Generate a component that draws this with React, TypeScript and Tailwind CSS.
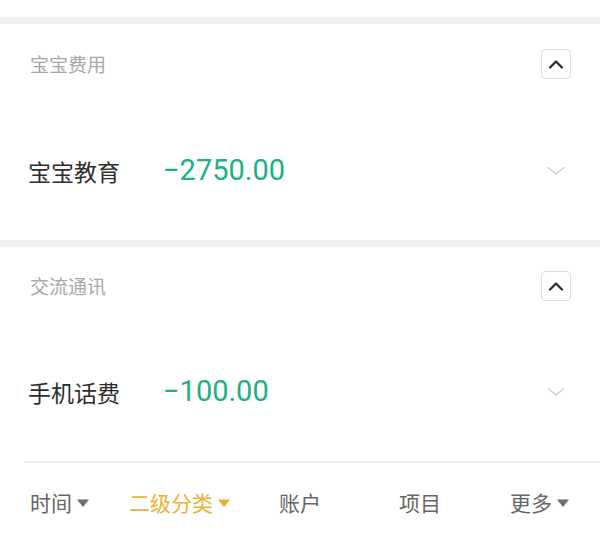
import * as React from "react";

const CJK = { fontFamily: '"Noto Sans CJK SC", "Noto Sans", sans-serif' };

function ChevronUpBox() {
  return (
    <div className="w-[30px] h-[30px] rounded-[4px] border border-[#dcdcdc] flex items-center justify-center bg-white">
      <svg width="16" height="10" viewBox="0 0 16 10" fill="none">
        <path d="M2 8.5L8 2.5L14 8.5" stroke="#2a2a2a" strokeWidth="2.2" strokeLinecap="round" strokeLinejoin="round" />
      </svg>
    </div>
  );
}

function ChevronDown() {
  return (
    <svg width="20" height="12" viewBox="0 0 20 12" fill="none">
      <path d="M2 2.5L10 9L18 2.5" stroke="#cfcfcf" strokeWidth="1.6" strokeLinecap="round" strokeLinejoin="round" />
    </svg>
  );
}

function Caret({ color }: { color: string }) {
  return (
    <svg width="14" height="10" viewBox="0 0 14 10" className="ml-[4px]">
      <path d="M1 1.5H13L7 9Z" fill={color} />
    </svg>
  );
}

interface Group {
  title: string;
  label: string;
  amount: string;
  headerH: string;
}

function Section({ g }: { g: Group }) {
  return (
    <div className="bg-white">
      <div className={`${g.headerH} flex items-center justify-between pl-[30px] pr-[29px]`}>
        <span className="text-[19px] text-[#a8a8a8]" style={CJK}>{g.title}</span>
        <ChevronUpBox />
      </div>
      <div className="h-[134px] flex items-center pl-[28px] pr-[34px]">
        <span className="w-[135px] text-[23px] text-[#2e2e2e]" style={CJK}>{g.label}</span>
        <span
          className="flex-1 text-[29px] font-normal text-[#22b07b]"
          style={{ fontFamily: "Roboto, sans-serif" }}
        >
          {g.amount}
        </span>
        <ChevronDown />
      </div>
    </div>
  );
}

export default function App() {
  const tabs = [
    { name: "时间", caret: true, active: false },
    { name: "二级分类", caret: true, active: true },
    { name: "账户", caret: false, active: false },
    { name: "项目", caret: false, active: false },
    { name: "更多", caret: true, active: false },
  ];

  return (
    <div className="w-[600px] h-[543px] bg-white overflow-hidden">
      <div className="h-[17px] bg-white" />
      <div className="h-[7px] bg-[#f0f0f0]" />
      <Section g={{ title: "宝宝费用", label: "宝宝教育", amount: "−2750.00", headerH: "h-[80px]" }} />
      <div className="h-[2px] bg-white" />
      <div className="h-[7px] bg-[#f0f0f0]" />
      <Section g={{ title: "交流通讯", label: "手机话费", amount: "−100.00", headerH: "h-[78px]" }} />
      <div className="h-[2px] bg-white" />
      <div className="h-[2px] bg-[#ededed] ml-[24px]" />
      <div className="h-[80px] grid grid-cols-5 items-center">
        {tabs.map((t) => (
          <div key={t.name} className="flex items-center justify-center">
            <span
              className={`text-[21px] ${t.active ? "text-[#ecb23c]" : "text-[#666666]"}`}
              style={CJK}
            >
              {t.name}
            </span>
            {t.caret && <Caret color={t.active ? "#f0a830" : "#6e6e6e"} />}
          </div>
        ))}
      </div>
    </div>
  );
}
